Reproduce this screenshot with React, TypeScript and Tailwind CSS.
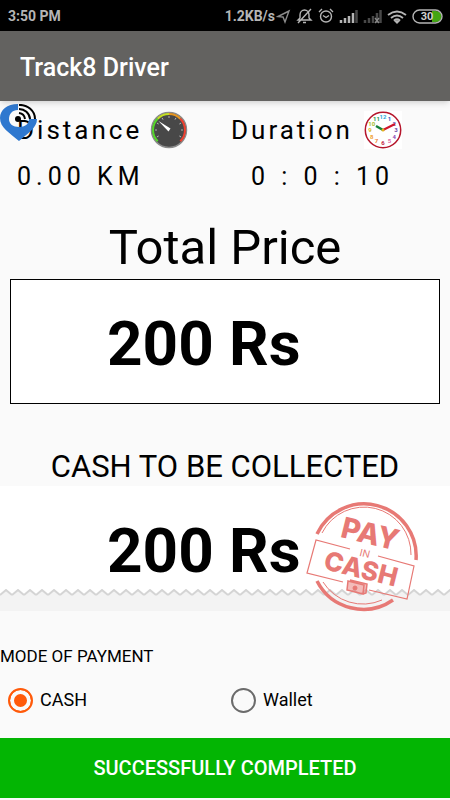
import { useState } from 'react';

const hours = [
  { label: '12', color: '#2fa8d8' },
  { label: '1', color: '#2b5fc0' },
  { label: '2', color: '#5a4bb0' },
  { label: '3', color: '#6b4aa5' },
  { label: '4', color: '#8b4ab5' },
  { label: '5', color: '#e06aa8' },
  { label: '6', color: '#c02040' },
  { label: '7', color: '#f08030' },
  { label: '8', color: '#f0a030' },
  { label: '9', color: '#d8b820' },
  { label: '10', color: '#a8c030' },
  { label: '11', color: '#2f9a50' },
];

const MapLogo = () => (
  <svg viewBox="0 0 38 38" className="absolute left-0 top-[3px] h-[38px] w-[38px]" aria-hidden="true">
    <path d="M18 0C7 0 0 6 0 14c0 10 10 15 19 23 9-8 18-13 18-22h-8c0 5-4 8-10 8S9 20 9 15s3-9 9-9z" fill="#2f78cf" />
    <circle cx="18" cy="15" r="3" fill="#000" />
    <g fill="none" stroke="#000" strokeWidth="2">
      <path d="M19 9a7 7 0 0 1 6 6" />
      <path d="M19 5a11 11 0 0 1 11 10" />
      <path d="M19 1a15 14 0 0 1 16 14" />
    </g>
  </svg>
);

const Speedometer = () => (
  <svg viewBox="0 0 38 38" className="h-[38px] w-[38px]" aria-hidden="true">
    <circle cx="19" cy="19" r="17.500" fill="#484848" stroke="#8a8a8a" strokeWidth="1.5" />
    <g fill="none" strokeWidth="2">
      <path d="M7.7 30.3A16 16 0 0 1 7.7 7.7" stroke="#55d62a" />
      <path d="M7.7 7.7A16 16 0 0 1 19 3" stroke="#c4df24" />
      <path d="M19 3a16 16 0 0 1 11.3 4.7" stroke="#e8961f" />
      <path d="M30.3 7.7a16 16 0 0 1 0 22.6" stroke="#ee4030" />
    </g>
    {[-120, -90, -60, -30, 0, 30, 60, 90, 120].map((angle) => (
      <path key={angle} d="M19 5v2" stroke="#ddd" strokeWidth=".7" transform={`rotate(${angle} 19 19)`} />
    ))}
    <path d="M8.5 10l12 7.5-2 3z" fill="#fff" />
  </svg>
);

const Clock = () => (
  <svg viewBox="0 0 38 38" className="h-[38px] w-[38px] bg-white tracking-normal" aria-hidden="true">
    <circle cx="19" cy="19" r="17.7" fill="#fff" stroke="#b5152b" strokeWidth="1.5" />
    {hours.map((hour, i) => (
      <text
        key={hour.label}
        x={19 + 13 * Math.sin((i * Math.PI) / 6)}
        y={21 - 13 * Math.cos((i * Math.PI) / 6)}
        fill={hour.color}
        fontSize="6"
        fontWeight="700"
        textAnchor="middle"
      >
        {hour.label}
      </text>
    ))}
    <path d="M19 19l-7-4" stroke="#16813a" strokeWidth="2.4" />
    <path d="M19 19l12-6" stroke="#d0152b" strokeWidth="2" />
    <circle cx="19" cy="19" r="1.5" fill="#e3b11b" />
  </svg>
);

const StatusIcons = () => (
  <svg viewBox="0 0 175 20" className="h-5 w-[175px]" fill="none" stroke="#b5b5b5" strokeWidth="1.4" aria-hidden="true">
    <path d="M3 10.500L14 5l-4 11-2-5z" stroke="#8b8b8b" />
    <path d="M23 14h13l-2-2V9c0-3-2-5-4.500-5S25 6 25 9v3zM28 16.500h3M36 3L23 17" />
    <circle cx="51" cy="10.500" r="5.500" />
    <path d="M48 9.500l3 2 3-2M44 6l3-3M55 3l3 3" />
    <g strokeWidth="2.500">
      <path d="M66 17v-3M70 17v-5M74 17v-7M78 17V7" />
      <path d="M81.500 17V4M90 17v-3M94 17v-5M98 17v-7M102 17V7M105.500 17V4" stroke="#484848" />
    </g>
    <path d="M100 12l4 5M104 12l-4 5" stroke="#888" />
    <path d="M113 9q9-7 18 0M116 12q6-5 12 0M119 14.500q3-2.500 6 0" strokeWidth="1.800" />
    <path d="M120 15h4l-2 2z" fill="#b5b5b5" />
    <path d="M157 5h4a5.500 5.500 0 0 1 0 11h-4z" fill="#43a514" stroke="none" />
    <rect x="138" y="4" width="29" height="13" rx="6.500" />
    <text x="152" y="14" fill="#d0d0d0" stroke="none" fontSize="11" fontWeight="700" textAnchor="middle">30</text>
  </svg>
);

const Stamp = () => (
  <svg viewBox="0 0 116 110" className="absolute right-[29px] top-4 h-[110px] w-[116px]" fill="none" stroke="#e77975" aria-hidden="true">
    <path d="M12 32A52 52 0 0 1 111 58" strokeWidth="3.500" />
    <path d="M17 31A47 47 0 0 1 106 53" />
    <path d="M12 79A52 52 0 0 0 88 98" strokeWidth="3.500" />
    <path d="M18 80A47 47 0 0 0 77 98" />
    <path d="M45 47L11 38 2 71l36 9M73 54l36 10-7 33-38-9" strokeWidth="1.2" />
    <g fill="#e77975" stroke="none" textAnchor="middle" className="font-['Inter',sans-serif]">
      <text x="65" y="42" fontSize="29" fontWeight="800" transform="rotate(14 65 33)">PAY</text>
      <text x="60" y="55" fontSize="10" transform="rotate(14 60 51)">IN</text>
      <text x="56" y="76" fontSize="26" fontWeight="800" transform="rotate(14 56 67)">CASH</text>
    </g>
    <path d="M43 79l16 4-1 9-16-4zM45 78l17 4-1 9-3 1" fill="#e77975" fillOpacity=".5" strokeWidth="1.5" />
    <circle cx="50" cy="86" r="2" fill="#e77975" />
  </svg>
);

export default function App() {
  const [mode, setMode] = useState('cash');

  return (
    <div className="flex min-h-screen flex-col bg-[#fafafa] font-['Roboto',sans-serif] text-black">
      <div className="flex h-[31px] items-center justify-between bg-black pl-2 text-[#b5b5b5]">
        <span className="text-sm font-bold">3:50 PM</span>
        <div className="flex items-center">
          <span className="text-sm font-bold">1.2KB/s</span>
          <StatusIcons />
        </div>
      </div>

      <header className="z-10 flex h-[70px] items-center bg-[#636260] px-5 pt-1 shadow-md">
        <h1 className="text-[25px] font-medium text-white">Track8 Driver</h1>
      </header>

      <main className="relative flex flex-1 flex-col">
        {/* Trip summary */}
        <section className="grid grid-cols-2 pt-2.5 leading-[38px]">
          <div className="pl-[17px]">
            <div className="flex gap-2 text-[26px] tracking-[3px]">
              <h2>Distance</h2>
              <Speedometer />
            </div>
            <p className="mt-[9px] text-[25px] tracking-[5px]">0.00 KM</p>
          </div>
          <div className="pl-1.5">
            <div className="flex gap-[11px] text-[26px] tracking-[3px]">
              <h2>Duration</h2>
              <Clock />
            </div>
            <p className="mt-[9px] pl-5 text-[25px] tracking-[5px]">0 : 0 : 10</p>
          </div>
        </section>
        <MapLogo />

        {/* Total */}
        <section className="px-2.5 pt-[22px]">
          <h2 className="pb-px text-center text-[49px] leading-[60px]">Total Price</h2>
          <div className="flex h-[125px] items-center border border-black bg-white pl-24 pt-1 text-[62px] font-bold">
            200 Rs
          </div>
        </section>

        {/* Cash to collect */}
        <section className="pt-11">
          <h2 className="text-center text-[31px] leading-[38px]">CASH TO BE COLLECTED</h2>
          <div className="relative bg-white">
            <p className="flex h-[103px] items-end pl-[107px] text-[62px] font-bold leading-[76px]">200 Rs</p>
            <svg className="block h-[22px] w-full" aria-hidden="true">
              <defs>
                <pattern id="zigzag" width="12" height="22" patternUnits="userSpaceOnUse">
                  <path d="M0 6L6 1l6 5v16H0z" fill="#f3f3f3" />
                  <path d="M0 6L6 1l6 5" fill="none" stroke="#d4d4d4" strokeWidth="2" />
                </pattern>
              </defs>
              <rect width="100%" height="22" fill="url(#zigzag)" />
            </svg>
            <Stamp />
          </div>
        </section>

        <fieldset className="pt-[33px]">
          <legend className="float-left w-full text-[17px] leading-6">MODE OF PAYMENT</legend>
          <div className="clear-both grid grid-cols-2 pt-[18px] text-lg">
            <label className="flex items-center gap-[7px] pl-2">
              <input
                type="radio"
                name="mode"
                checked={mode === 'cash'}
                onChange={() => setMode('cash')}
                className="h-[25px] w-[25px] appearance-none rounded-full border-2 border-[#6b6b6b] checked:border-[#ff5a0a] checked:bg-[#ff5a0a] checked:shadow-[inset_0_0_0_4px_#fafafa]"
              />
              CASH
            </label>
            <label className="flex items-center gap-[7px] pl-1.5">
              <input
                type="radio"
                name="mode"
                checked={mode === 'wallet'}
                onChange={() => setMode('wallet')}
                className="h-[25px] w-[25px] appearance-none rounded-full border-2 border-[#6b6b6b] checked:border-[#ff5a0a] checked:bg-[#ff5a0a] checked:shadow-[inset_0_0_0_4px_#fafafa]"
              />
              Wallet
            </label>
          </div>
        </fieldset>
      </main>

      <button type="button" className="mb-0.5 h-[60px] w-full bg-[#03b503] text-xl font-medium text-white">
        SUCCESSFULLY COMPLETED
      </button>
    </div>
  );
}
